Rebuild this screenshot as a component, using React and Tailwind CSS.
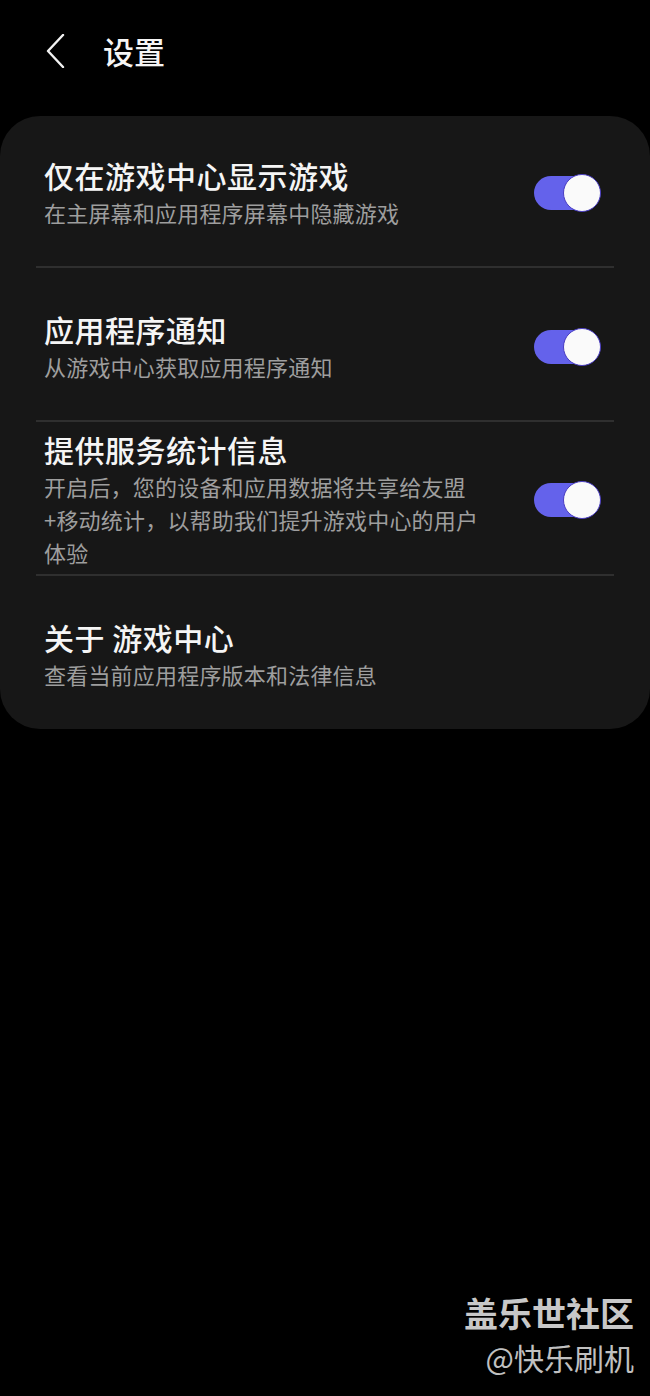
import React from "react";

const font = { fontFamily: '"Noto Sans CJK SC", "Noto Sans", sans-serif' };

function Toggle() {
  return (
    <div className="relative w-[67px] h-[38px] shrink-0">
      <div className="absolute left-0 top-[2px] w-[62px] h-[34px] rounded-full bg-[#6462eb]" />
      <div className="absolute right-0 top-0 w-[38px] h-[38px] rounded-full bg-[#fafafa] border-[1.5px] border-[#4a3dc2]" />
    </div>
  );
}

function Divider() {
  return <div className="mx-[36px] h-[2px] bg-[#2f2f2f]" />;
}

function Row({ title, lines, toggle, className }) {
  return (
    <div className={"flex items-center pl-[44px] pr-[49px] " + className}>
      <div className="flex-1 flex flex-col">
        <div className="text-[30px] leading-[38px] font-medium text-[#f5f5f5] tracking-[0.5px] whitespace-nowrap">
          {title}
        </div>
        <div className="mt-[2px] text-[22px] leading-[33px] text-[#9e9e9e] tracking-[0.2px]">
          {lines.map((l, i) => (
            <div key={i} className="whitespace-nowrap">
              {l}
            </div>
          ))}
        </div>
      </div>
      {toggle && <Toggle />}
    </div>
  );
}

export default function App() {
  return (
    <div className="min-h-[1396px] w-[650px] bg-black flex flex-col" style={font}>
      <div className="h-[116px] flex items-start pt-[34px] pl-[46px]">
        <svg width="20" height="34" viewBox="0 0 20 34" className="shrink-0">
          <polyline
            points="17,1 2,17 17,33"
            fill="none"
            stroke="#f2f2f2"
            strokeWidth="2.4"
            strokeLinecap="round"
            strokeLinejoin="round"
          />
        </svg>
        <div className="ml-[37px] -mt-[3px] text-[31px] leading-[40px] font-medium text-[#f5f5f5]">
          设置
        </div>
      </div>

      <div className="w-[650px] rounded-[40px] bg-[#171717]">
        <Row
          className="pt-[40px] pb-[37px]"
          title="仅在游戏中心显示游戏"
          lines={["在主屏幕和应用程序屏幕中隐藏游戏"]}
          toggle
        />
        <Divider />
        <Row
          className="pt-[42px] pb-[37px]"
          title="应用程序通知"
          lines={["从游戏中心获取应用程序通知"]}
          toggle
        />
        <Divider />
        <Row
          className="pt-[8px] pb-[5px]"
          title="提供服务统计信息"
          lines={[
            "开启后，您的设备和应用数据将共享给友盟",
            "+移动统计，以帮助我们提升游戏中心的用户",
            "体验",
          ]}
          toggle
        />
        <Divider />
        <Row
          className="pt-[42px] pb-[38px]"
          title="关于 游戏中心"
          lines={["查看当前应用程序版本和法律信息"]}
        />
      </div>

      <div className="mt-auto flex flex-col items-end pr-[16px] pb-[20px]">
        <div className="text-[34px] leading-[42px] font-bold text-[#c8c8c8]">
          盖乐世社区
        </div>
        <div className="mt-[4px] text-[30px] leading-[38px] text-[#c0c0c0]">
          @快乐刷机
        </div>
      </div>
    </div>
  );
}
